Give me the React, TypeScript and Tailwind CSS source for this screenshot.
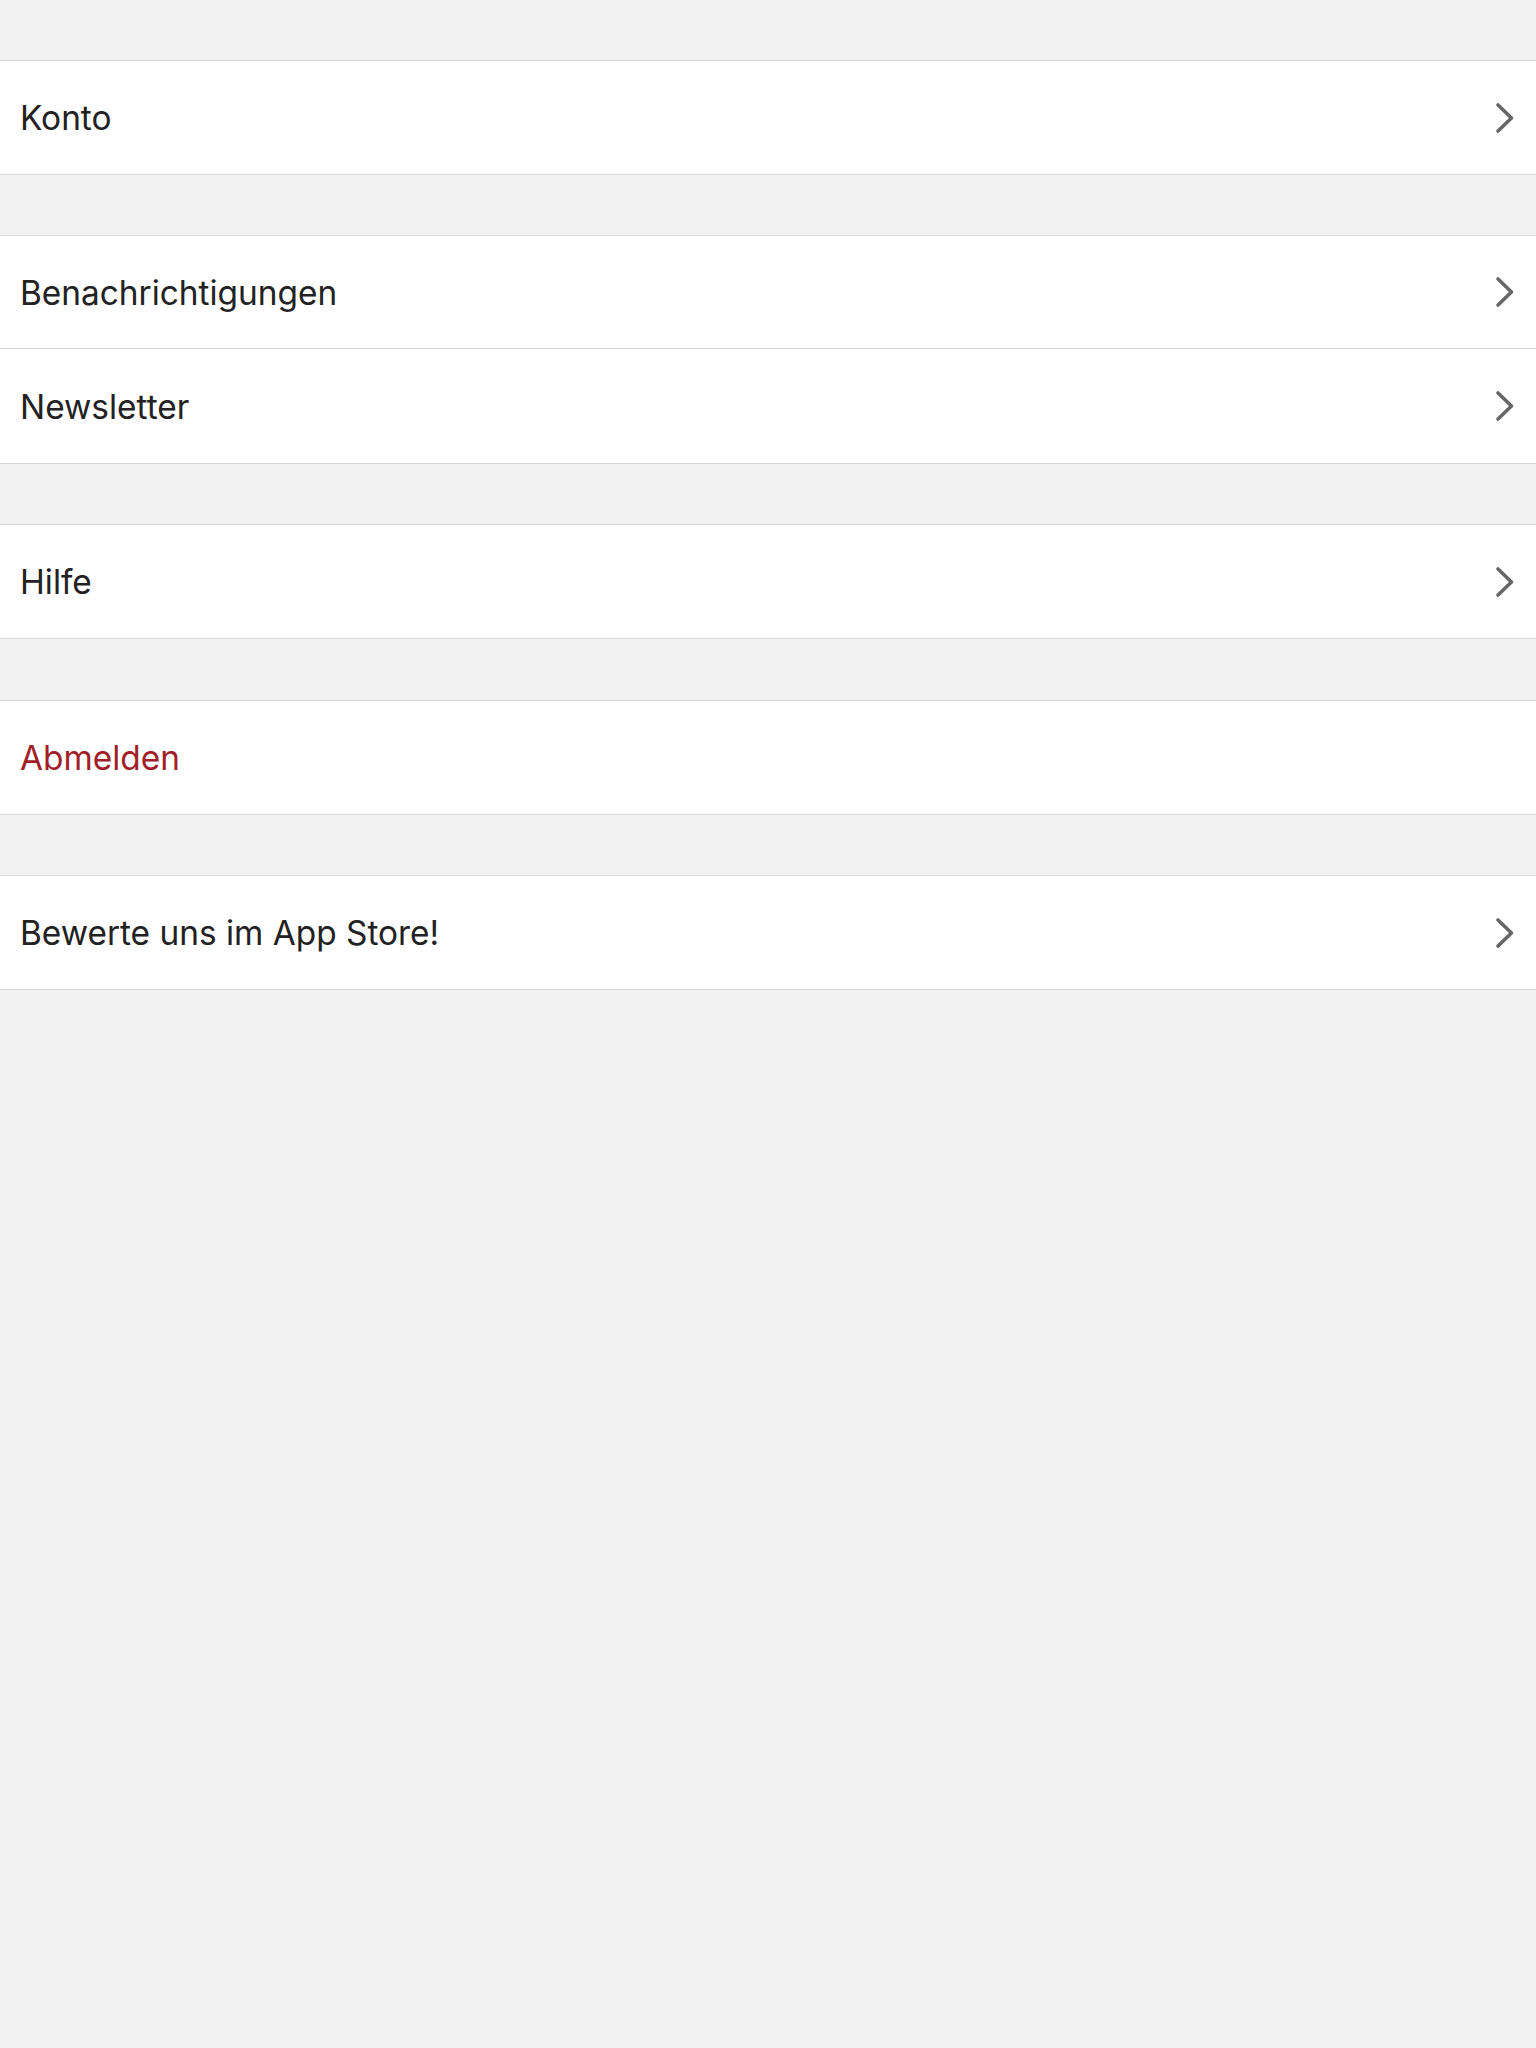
import React from 'react';

interface Row {
    label: string;
    danger?: boolean;
    chevron?: boolean;
    tall?: boolean;
}

const groups: { rows: Row[]; gap: string }[] = [
    { rows: [{ label: 'Konto', chevron: true }], gap: '' },
    {
        rows: [
            { label: 'Benachrichtigungen', chevron: true },
            { label: 'Newsletter', chevron: true, tall: true },
        ],
        gap: 'mt-[60px]',
    },
    { rows: [{ label: 'Hilfe', chevron: true }], gap: 'mt-[60px]' },
    { rows: [{ label: 'Abmelden', danger: true }], gap: 'mt-[61px]' },
    { rows: [{ label: 'Bewerte uns im App Store!', chevron: true }], gap: 'mt-[60px]' },
];

function Chevron() {
    return (
        <svg width="22" height="32" viewBox="0 0 22 32" fill="none" className="shrink-0">
            <path d="M4 3 L17.5 16 L4 29" stroke="#666666" strokeWidth="3.6" strokeLinecap="round" strokeLinejoin="round" />
        </svg>
    );
}

export default function App() {
    return (
        <div className="min-h-[2048px] w-full bg-[#f2f2f2] pt-[60px] font-['Inter','Liberation_Sans',sans-serif]">
            {groups.map((group, gi) => (
                <div key={gi} className={`${group.gap} bg-white border-y border-[#d8d8d8] divide-y divide-[#d8d8d8]`}>
                    {group.rows.map(row => (
                        <div
                            key={row.label}
                            className={`${row.tall ? 'h-[114px]' : 'h-[113px]'} flex items-center justify-between pl-5 pr-[20px]`}
                        >
                            <span className={`pt-[3px] text-[33.4px] leading-none ${row.danger ? 'text-[#a11f29]' : 'text-[#222222]'}`}>
                                {row.label}
                            </span>
                            {row.chevron && <Chevron />}
                        </div>
                    ))}
                </div>
            ))}
        </div>
    );
}
